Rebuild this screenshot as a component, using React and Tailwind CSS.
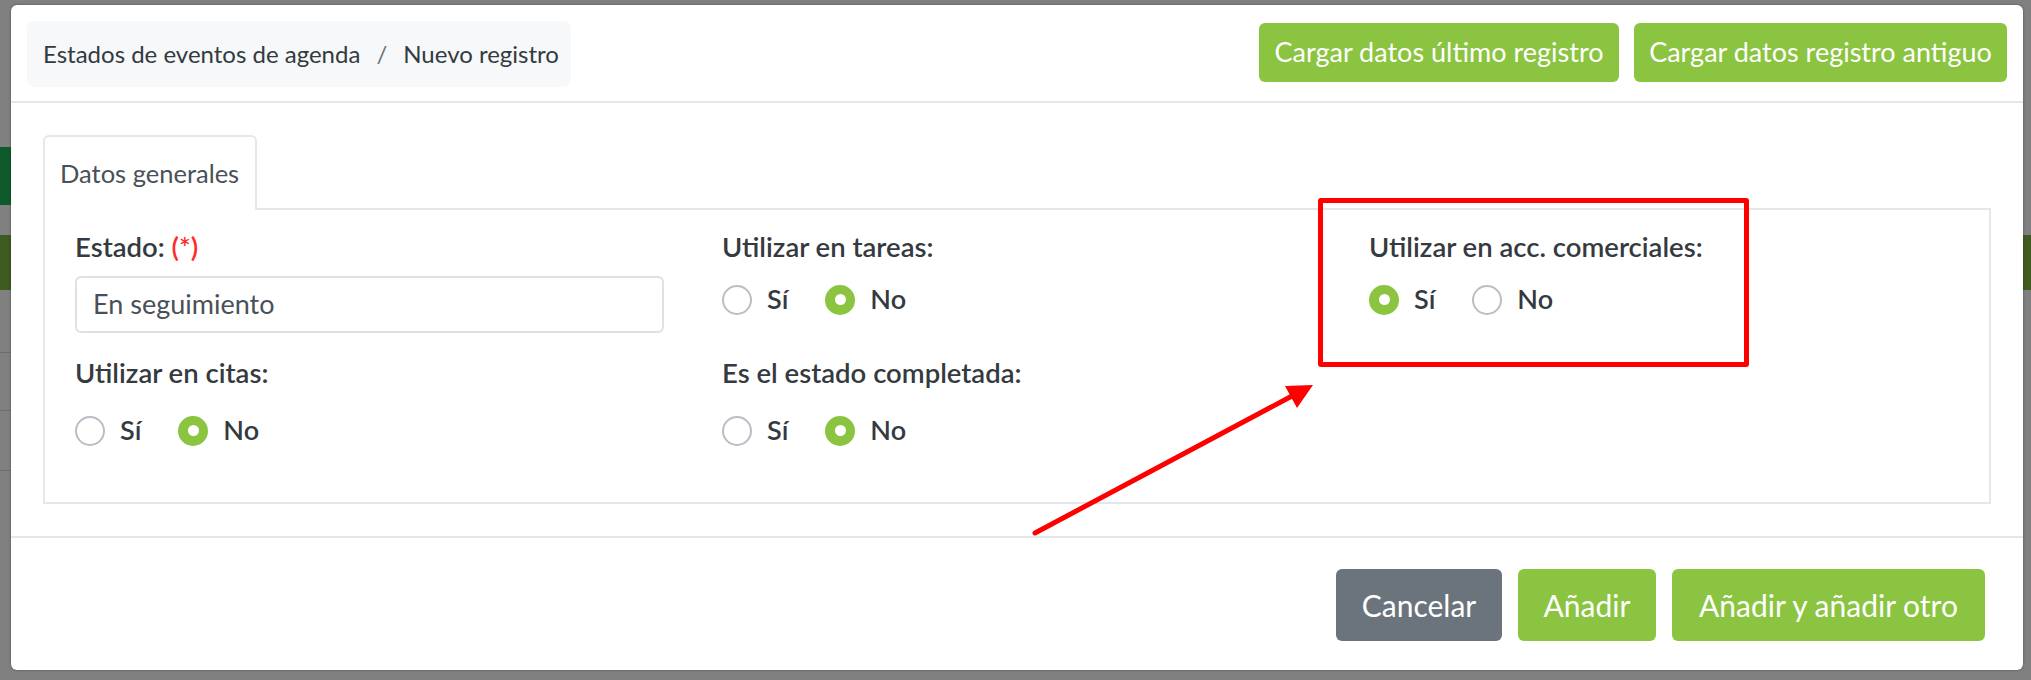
import React from "react";

function Radio({ checked }) {
  if (checked) {
    return (
      <span className="flex h-[30px] w-[30px] shrink-0 items-center justify-center rounded-full bg-[#8bc440]">
        <span className="h-[11px] w-[11px] rounded-full bg-white" />
      </span>
    );
  }
  return <span className="block h-[30px] w-[30px] shrink-0 rounded-full border-2 border-[#b9bec4] bg-white" />;
}

function RadioRow({ value }) {
  return (
    <div className="flex h-[57px] items-center">
      <Radio checked={value === "si"} />
      <span className="ml-[15px] font-semibold text-[#343a40]">Sí</span>
      <span className="ml-[37px] flex">
        <Radio checked={value === "no"} />
      </span>
      <span className="ml-[15px] font-semibold text-[#343a40]">No</span>
    </div>
  );
}

function Label({ children }) {
  return (
    <div className="h-[30px] whitespace-nowrap text-[27.5px] leading-[30px] font-semibold text-[#343a40]">
      {children}
    </div>
  );
}

export default function App() {
  return (
    <div className="relative h-[680px] w-[2031px] overflow-hidden bg-[#808080] font-[Lato,sans-serif] text-[27px]">
      {/* underlying page remnants */}
      <div className="absolute left-0 top-[147px] h-[58px] w-[11px] bg-[#0f5a2b]" />
      <div className="absolute left-0 top-[235px] h-[55px] w-[11px] bg-[#3e5b22]" />
      <div className="absolute right-0 top-[235px] h-[55px] w-[8px] bg-[#3e5b22]" />
      <div className="absolute left-0 top-[352px] h-px w-[11px] bg-[#6e6e6e]" />
      <div className="absolute left-0 top-[410px] h-px w-[11px] bg-[#6e6e6e]" />
      <div className="absolute left-0 top-[470px] h-px w-[11px] bg-[#6e6e6e]" />

      {/* modal */}
      <div className="relative ml-[11px] mt-[5px] flex h-[665px] w-[2012px] flex-col rounded-[6px] bg-white shadow-[0_0_3px_rgba(0,0,0,0.35)]">
        {/* header */}
        <div className="flex h-[98px] shrink-0 items-start justify-between border-b-2 border-[#e4e8ec] px-[16px] pt-[16px]">
          <div className="flex h-[66px] w-[544px] items-center whitespace-nowrap rounded-[8px] bg-[#f7f8f9] pl-[16px] text-[24px] text-[#333a40]">
            <span>Estados de eventos de agenda</span>
            <span className="mx-[16px] text-[#6c757d]">/</span>
            <span>Nuevo registro</span>
          </div>
          <div className="mt-[2px] flex gap-[15px]">
            <button className="flex h-[59px] w-[360px] items-center justify-center whitespace-nowrap rounded-[6px] bg-[#8bc440] text-[27px] text-white">
              Cargar datos último registro
            </button>
            <button className="flex h-[59px] w-[373px] items-center justify-center whitespace-nowrap rounded-[6px] bg-[#8bc440] text-[27px] text-white">
              Cargar datos registro antiguo
            </button>
          </div>
        </div>

        {/* body */}
        <div className="flex flex-1 flex-col px-[32px] pt-[32px] pb-[32px]">
          <div className="flex">
            <div className="relative z-10 -mb-[2px] flex h-[75px] w-[214px] items-center whitespace-nowrap rounded-t-[6px] border-2 border-b-0 border-[#e4e8ec] bg-white pl-[15px] text-[25.5px] text-[#495057]">
              Datos generales
            </div>
          </div>
          <div className="grid flex-1 grid-cols-[621px_621px_621px] gap-x-[26px] border-2 border-[#e4e8ec] pl-[30px] pt-[22px]">
            <div className="flex flex-col">
              <Label>
                Estado: <span className="text-[#ff2a2a]">(*)</span>
              </Label>
              <div className="mt-[14px] flex h-[57px] w-[589px] items-center rounded-[6px] border-2 border-[#dde1e5] pl-[16px] text-[#495057]">
                En seguimiento
              </div>
              <div className="mt-[25px]">
                <Label>Utilizar en citas:</Label>
              </div>
              <div className="mt-[14px]">
                <RadioRow value="no" />
              </div>
            </div>
            <div className="flex flex-col">
              <Label>Utilizar en tareas:</Label>
              <div className="mt-[9px]">
                <RadioRow value="no" />
              </div>
              <div className="mt-[30px]">
                <Label>Es el estado completada:</Label>
              </div>
              <div className="mt-[14px]">
                <RadioRow value="no" />
              </div>
            </div>
            <div className="flex flex-col">
              <Label>Utilizar en acc. comerciales:</Label>
              <div className="mt-[9px]">
                <RadioRow value="si" />
              </div>
            </div>
          </div>
        </div>

        {/* footer */}
        <div className="flex h-[134px] shrink-0 items-start justify-end gap-[16px] border-t-2 border-[#e4e8ec] pr-[38px] pt-[31px]">
          <button className="flex h-[72px] w-[166px] items-center justify-center whitespace-nowrap rounded-[6px] bg-[#6b747d] text-[30px] text-white">
            Cancelar
          </button>
          <button className="flex h-[72px] w-[138px] items-center justify-center whitespace-nowrap rounded-[6px] bg-[#8bc440] text-[30px] text-white">
            Añadir
          </button>
          <button className="flex h-[72px] w-[313px] items-center justify-center whitespace-nowrap rounded-[6px] bg-[#8bc440] text-[30px] text-white">
            Añadir y añadir otro
          </button>
        </div>
      </div>

      {/* annotation: red box */}
      <div className="pointer-events-none absolute left-[1318px] top-[198px] h-[169px] w-[431px] rounded-[3px] border-[5px] border-[#ff0000]" />

      {/* annotation: arrow */}
      <svg className="pointer-events-none absolute left-0 top-0" width="2031" height="680" viewBox="0 0 2031 680">
        <line x1="1035" y1="533" x2="1292" y2="396" stroke="#ff0000" strokeWidth="5" strokeLinecap="round" />
        <polygon points="1313,385 1297,408 1285,386" fill="#ff0000" />
      </svg>
    </div>
  );
}
